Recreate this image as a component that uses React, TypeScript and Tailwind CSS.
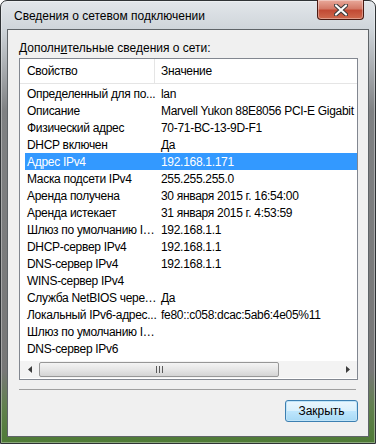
import { ReactNode } from "react"

const ROWS: [string, string][] = [
	["Определенный для по...", "lan"],
	["Описание", "Marvell Yukon 88E8056 PCI-E Gigabit Ethernet Controller"],
	["Физический адрес", "70-71-BC-13-9D-F1"],
	["DHCP включен", "Да"],
	["Адрес IPv4", "192.168.1.171"],
	["Маска подсети IPv4", "255.255.255.0"],
	["Аренда получена", "30 января 2015 г. 16:54:00"],
	["Аренда истекает", "31 января 2015 г. 4:53:59"],
	["Шлюз по умолчанию IP...", "192.168.1.1"],
	["DHCP-сервер IPv4", "192.168.1.1"],
	["DNS-сервер IPv4", "192.168.1.1"],
	["WINS-сервер IPv4", ""],
	["Служба NetBIOS через...", "Да"],
	["Локальный IPv6-адрес...", "fe80::c058:dcac:5ab6:4e05%11"],
	["Шлюз по умолчанию IP...", ""],
	["DNS-сервер IPv6", ""],
]

const SELECTED = 4

function CloseButton() {
	return (
		<div className="-mt-px mr-[5px] w-[47px] h-[20px] rounded-b-[4px] border border-[#4a1a12] border-t-0 bg-[linear-gradient(to_bottom,#e9a99b_0%,#d47a68_45%,#c24a34_55%,#cf6a4e_100%)] shadow-[inset_0_0_0_1px_rgba(255,255,255,0.35)] flex items-center justify-center">
			<svg width="14" height="12" viewBox="0 0 14 12">
				<path d="M2 1.5 L12 10.5 M12 1.5 L2 10.5" stroke="#3b3b3b" strokeWidth="4.2" strokeLinecap="round" />
				<path d="M2 1.5 L12 10.5 M12 1.5 L2 10.5" stroke="#ffffff" strokeWidth="2.2" strokeLinecap="round" />
			</svg>
		</div>
	)
}

function Arrow({ dir }: { dir: "left" | "right" }) {
	return (
		<svg width="4" height="7" viewBox="0 0 4 7">
			{dir === "left"
				? <path d="M4 0 L0 3.5 L4 7 Z" fill="#3c3c3c" />
				: <path d="M0 0 L4 3.5 L0 7 Z" fill="#3c3c3c" />}
		</svg>
	)
}

function ScrollBar() {
	return (
		<div className="mt-[4px] h-[17px] flex items-center bg-[#f3f3f3]">
			<div className="w-[18px] h-full flex items-center justify-center pl-[2px]">
				<Arrow dir="left" />
			</div>
			<div className="ml-[1px] w-[240px] h-[15px] rounded-[2px] border border-[#979797] bg-[linear-gradient(to_bottom,#f4f4f4,#e6e6e6_50%,#d4d4d4)] flex items-center justify-center gap-[2px]">
				<span className="w-px h-[7px] bg-[#5a5a5a]" />
				<span className="w-px h-[7px] bg-[#5a5a5a]" />
				<span className="w-px h-[7px] bg-[#5a5a5a]" />
			</div>
			<div className="flex-1" />
			<div className="w-[17px] h-full flex items-center justify-center pr-[1px]">
				<Arrow dir="right" />
			</div>
		</div>
	)
}

function Row({ name, value, selected }: { name: string, value: string, selected: boolean }) {
	return (
		<div className={"ml-[5px] h-[17px] flex items-center whitespace-nowrap overflow-hidden tracking-[-0.3px] " + (selected ? "bg-[#3399ff] text-white" : "text-black")}>
			<span className="w-[136px] shrink-0 pl-[2px] pr-[3px] overflow-hidden text-ellipsis">{name}</span>
			<span>{value}</span>
		</div>
	)
}

function Frame({ children }: { children: ReactNode }) {
	return (
		<div className="w-[376px] h-[444px] rounded-t-[7px] border border-[#2f3336] bg-[linear-gradient(to_bottom,#e2e6ea_0px,#cfd5da_28px,#b0b4b8_60px,#7f8183_110px,#777777_370px,#62804f_405px,#4d7a34_444px)] flex flex-col px-[6px] pb-[6px] shadow-[inset_0_0_0_1px_rgba(255,255,255,0.35)]">
			{children}
		</div>
	)
}

export default function App() {
	return (
		<div className="font-['Liberation_Sans',Arial,sans-serif] text-[12px] leading-[14px]">
			<Frame>
				<div className="h-[28px] flex items-start justify-between shrink-0">
					<span className="pl-[7px] pt-[8px] text-[12px] leading-[14px] text-black">Сведения о сетевом подключении</span>
					<CloseButton />
				</div>

				<div className="flex-1 border border-[#5f6468] bg-[#f0f0f0] flex flex-col">
					<span className="ml-[11px] mt-[11px] text-black">
						Дополн<u>и</u>тельные сведения о сети:
					</span>

					<div className="ml-[11px] mt-[3px] w-[339px] h-[322px] border border-[#828790] bg-white flex flex-col">
						<div className="h-[25px] flex border-b border-[#e5e5e5] shrink-0 tracking-[-0.3px]">
							<div className="w-[135px] border-r border-[#e5e5e5] pl-[7px] flex items-center">Свойство</div>
							<div className="pl-[6px] flex items-center">Значение</div>
						</div>

						<div className="mt-px flex flex-col">
							{ROWS.map(([name, value], i) => (
								<Row key={i} name={name} value={value} selected={i === SELECTED} />
							))}
						</div>

						<ScrollBar />
					</div>

					<div className="ml-[11px] mt-[9px] w-[337px] h-px bg-[#a0a0a0]" />

					<div className="mt-[10px] mr-[10px] flex justify-end">
						<button className="w-[73px] h-[22px] rounded-[3px] border border-[#3c7fb1] bg-[linear-gradient(to_bottom,#eaf6fd,#d9f0fc_50%,#bee6fd_51%,#a7d9f5)] shadow-[inset_0_0_0_1px_#c0e4f8] text-black text-[12px] leading-[14px]">
							Закрыть
						</button>
					</div>
				</div>
			</Frame>
		</div>
	)
}
